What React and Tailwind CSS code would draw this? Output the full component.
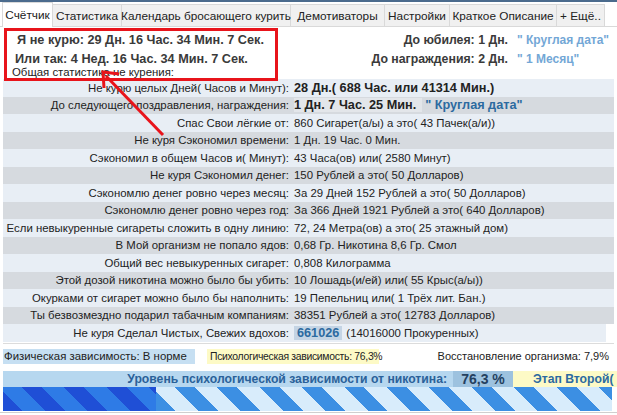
import React from "react"

const tabs = [
  { name: "Счётчик", w: "w-[51px]", active: true },
  { name: "Статистика", w: "w-[69px]" },
  { name: "Календарь бросающего курить", w: "w-[169px]" },
  { name: "Демотиваторы", w: "w-[94px]" },
  { name: "Настройки", w: "w-[65px]" },
  { name: "Краткое Описание", w: "w-[107px]" },
  { name: "+ Ещё..", w: "w-[48px]" },
]

const rows = [
  { label: "Не курю целых Дней( Часов и Минут):", value: <b className="text-[12.7px]">28 Дн.( 688 Час. или 41314 Мин.)</b> },
  {
    label: "До следующего поздравления, награждения:",
    value: (
      <>
        <b className="bg-[#e3e6ea] pr-[6px] text-[12.7px]">1 Дн. 7 Час. 25 Мин.</b>
        <b className="ml-[3px] text-[12.7px] text-[#2c6aa0]">" Круглая дата"</b>
      </>
    ),
  },
  { label: "Спас Свои лёгкие от:", value: "860 Сигарет(а/ы) а это( 43 Пачек(а/и))" },
  { label: "Не куря Сэкономил времени:", value: "1 Дн. 19 Час. 0 Мин." },
  { label: "Сэкономил в общем Часов и( Минут):", value: "43 Часа(ов) или( 2580 Минут)" },
  { label: "Не куря Сэкономил денег:", value: "150 Рублей а это( 50 Долларов)" },
  { label: "Сэкономлю денег ровно через месяц:", value: "За 29 Дней 152 Рублей а это( 50 Долларов)" },
  { label: "Сэкономлю денег ровно через год:", value: "За 366 Дней 1921 Рублей а это( 640 Долларов)" },
  { label: "Если невыкуренные сигареты сложить в одну линию:", value: "72, 24 Метра(ов)  а это( 25 этажный дом)" },
  { label: "В Мой организм не попало ядов:", value: "0,68 Гр. Никотина 8,6 Гр. Смол" },
  { label: "Общий вес невыкуренных сигарет:", value: "0,808 Килограмма" },
  { label: "Этой дозой никотина можно было бы убить:", value: "10 Лошадь(и/ей) или( 55 Крыс(а/ы))" },
  { label: "Окурками от сигарет можно было бы наполнить:", value: "19 Пепельниц или( 1 Трёх лит. Бан.)" },
  { label: "Ты безвозмездно подарил табачным компаниям:", value: "38351 Рублей а это( 12783 Долларов)" },
  {
    label: "Не куря Сделал Чистых, Свежих вдохов:",
    value: (
      <>
        <b className="bg-[#c4d4e4] px-[3px] text-[12.7px] text-[#2c6aa0]">661026</b>
        <span className="ml-[4px]">(14016000 Прокуренных)</span>
      </>
    ),
  },
]

export default function App() {
  return (
    <div className="relative h-[415px] w-[617px] overflow-hidden whitespace-nowrap bg-white font-['Liberation_Sans',Arial,sans-serif] text-[11.4px] leading-[14px] text-[#222]">
      <div className="h-[2px] bg-[#4b6b8d]" />

      {/* tabs */}
      <div className="flex h-[25px] items-end border-b border-[#d9d9d9] pl-[2px]">
        {tabs.map((t) => (
          <div
            key={t.name}
            className={
              t.active
                ? `${t.w} -mb-px flex h-[25px] items-center justify-center border border-b-0 border-[#d9d9d9] bg-white text-[11.8px]`
                : `${t.w} flex h-[22px] items-center justify-center border border-b-0 border-l-0 border-[#d9d9d9] bg-[#f0f0f0] text-[11.8px]`
            }
          >
            {t.name}
          </div>
        ))}
      </div>

      {/* header */}
      <div className="flex justify-between pl-[17px] pr-[6px] pt-[6px]">
        <div className="flex flex-col gap-[5px] text-[12.7px] font-bold text-[#3a3a3a]">
          <div className="h-[14px] leading-[14px]">Я не курю: 29 Дн. 16 Час. 34 Мин. 7 Сек.</div>
          <div className="-ml-[2px] h-[14px] leading-[14px]">Или так: 4 Нед. 16 Час. 34 Мин. 7 Сек.</div>
        </div>
        <div className="grid grid-cols-[auto_94px] gap-x-[9px] gap-y-[5px] font-bold leading-[14px]">
          <div className="text-right text-[12.3px] text-[#3a3a3a]">До юбилея: 1 Дн.</div>
          <div className="text-[12px] text-[#73a7d6]">" Круглая дата"</div>
          <div className="text-right text-[12.3px] text-[#3a3a3a]">До награждения: 2 Дн.</div>
          <div className="text-[12px] text-[#73a7d6]">" 1 Месяц"</div>
        </div>
      </div>

      {/* group box */}
      <div className="mx-[3px] border-b border-[#dcdcdc]">
        <div className="h-[13px] pl-[9px] leading-[13px]">Общая статистика не курения:</div>
        <div className="pb-[1px]">
          {rows.map((r, i) => (
            <div
              key={r.label}
              className={`flex h-[17.5px] items-center ${i % 2 === 0 ? "bg-[#e8eef5]" : "bg-[#d6dadf]"} ${i === rows.length - 1 ? "mr-[8px]" : ""}`}
            >
              <div className="w-[286px] shrink-0 text-right">{r.label}</div>
              <div className="pl-[5px]">{r.value}</div>
            </div>
          ))}
        </div>
      </div>

      {/* status */}
      <div className="mt-[5px] flex h-[15px] items-center px-[3px] leading-[15px]">
        <div className="w-[192px] bg-[#c6dff2] pl-[1px]">Физическая зависимость:  В норме</div>
        <div className="ml-[12px] w-[172px] bg-[#fdfac6] pl-[3px] text-[10.4px] tracking-[-0.3px]">Психологическая зависимость: 76,3%</div>
        <div className="ml-auto pr-[5px] text-[11px]">Восстановление организма: 7,9%</div>
      </div>

      <div className="mt-[7px] flex h-[16px] items-stretch overflow-hidden pl-[3px] text-[12.2px] font-bold leading-[16px]">
        <div className="flex-1 bg-[#b6d7ef] pr-[6px] text-right text-[#2a6199]">
          Уровень психологической зависимости от никотина:
        </div>
        <div className="w-[60px] bg-[#9dc2df] text-center text-[14px] text-[#24405f]">76,3 %</div>
        <div className="w-[104px] overflow-hidden bg-[#fdfac6] pl-[20px] text-[#2c6aa0]">Этап Второй(</div>
      </div>

      {/* progress */}
      <div className="ml-[3px] mr-[5px] flex h-[24px]">
        <div className="w-[153px] bg-[repeating-linear-gradient(45deg,#1f4fd6_0px,#1f4fd6_14px,#2e7be6_14px,#2e7be6_30px)]" />
        <div className="flex-1 bg-[repeating-linear-gradient(45deg,#3c8fe3_0px,#3c8fe3_14px,#d8ecfb_14px,#d8ecfb_30px)]" />
      </div>
      <div className="mt-[1px] h-px bg-[#cfcfcf]" />

      {/* annotation */}
      <div className="pointer-events-none absolute left-[4px] top-[28px] h-[53px] w-[274px] border-[3px] border-[#e8141b]" />
      <svg className="pointer-events-none absolute left-0 top-0" width="617" height="415">
        <line x1="163" y1="135" x2="106" y2="76" stroke="#e8141b" strokeWidth="3" />
        <polyline points="104,88 103,72 119,74" fill="none" stroke="#e8141b" strokeWidth="3" />
      </svg>
    </div>
  )
}
